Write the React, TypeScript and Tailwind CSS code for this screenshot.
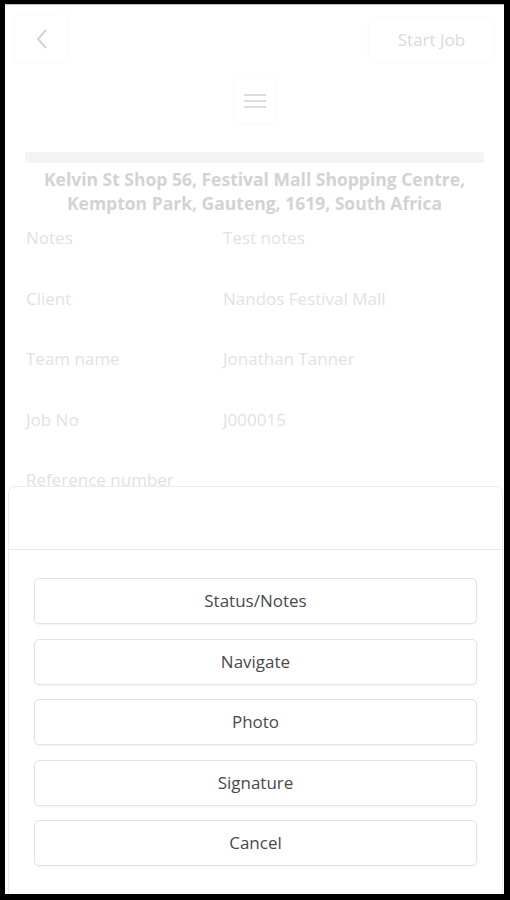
import React from 'react';

const rows = [
  { label: 'Notes', value: 'Test notes' },
  { label: 'Client', value: 'Nandos Festival Mall' },
  { label: 'Team name', value: 'Jonathan Tanner' },
  { label: 'Job No', value: 'J000015' },
  { label: 'Reference number', value: '' },
];

const actions = ['Status/Notes', 'Navigate', 'Photo', 'Signature', 'Cancel'];

const App: React.FC = () => {
  return (
    <div className="w-[510px] h-[900px] bg-black pt-[4px] pl-[5px]" style={{ fontFamily: '"Open Sans", "Noto Sans", sans-serif' }}>
      <div className="relative w-[499px] h-[890px] bg-white overflow-hidden border-t border-[#bdbdbd]">
        {/* page behind the sheet */}
        <div className="flex items-start justify-between px-[10px] pt-[10px]">
          <button className="w-[53px] h-[47px] flex items-center justify-center rounded shadow-[0_0_4px_rgba(0,0,0,0.04)]">
            <svg width="14" height="22" viewBox="0 0 14 22" fill="none" stroke="#d4d4d4" strokeWidth="2">
              <path d="M11 2 L3 11 L11 20" />
            </svg>
          </button>
          <button className="mt-[3px] w-[125px] h-[44px] rounded text-[17px] text-[#dadada] shadow-[0_0_4px_rgba(0,0,0,0.03)]">
            Start Job
          </button>
        </div>

        <div className="flex justify-center mt-[16px]">
          <div className="w-[42px] h-[46px] flex flex-col items-center justify-center gap-[4px] shadow-[0_0_4px_rgba(0,0,0,0.04)]">
            <span className="block w-[22px] h-[2px] bg-[#dcdcdc]" />
            <span className="block w-[22px] h-[2px] bg-[#dcdcdc]" />
            <span className="block w-[22px] h-[2px] bg-[#dcdcdc]" />
          </div>
        </div>

        <div className="mx-[20px] mt-[28px] h-[11px] bg-[#f4f4f4]" />

        <div className="mt-[4px] text-center text-[17.5px] leading-[24px] font-bold text-[#d3d3d3]">
          Kelvin St Shop 56, Festival Mall Shopping Centre,
          <br />
          Kempton Park, Gauteng, 1619, South Africa
        </div>

        <div className="mt-[11px] px-[21px] flex flex-col">
          {rows.map((r) => (
            <div key={r.label} className="h-[60.5px] flex text-[17px] leading-[24px] text-[#e2e2e2]">
              <span className="w-[197px]">{r.label}</span>
              <span>{r.value}</span>
            </div>
          ))}
        </div>

        {/* action sheet */}
        <div className="absolute left-[3px] right-[1px] top-[481px] bottom-0 bg-white rounded-t-[6px] border-t border-l border-r border-[#ececec] flex flex-col">
          <div className="h-[63px] border-b border-[#e6e6e6]" />
          <div className="flex flex-col gap-[14.5px] pt-[28px] pl-[25px] pr-[25px]">
            {actions.map((a) => (
              <button
                key={a}
                className="h-[46px] w-[443px] rounded-[5px] border border-[#e3e3e3] bg-white text-[17px] text-[#4a4a4a] shadow-[0_1px_2px_rgba(0,0,0,0.05)]"
              >
                {a}
              </button>
            ))}
          </div>
        </div>
      </div>
    </div>
  );
};

export default App;
